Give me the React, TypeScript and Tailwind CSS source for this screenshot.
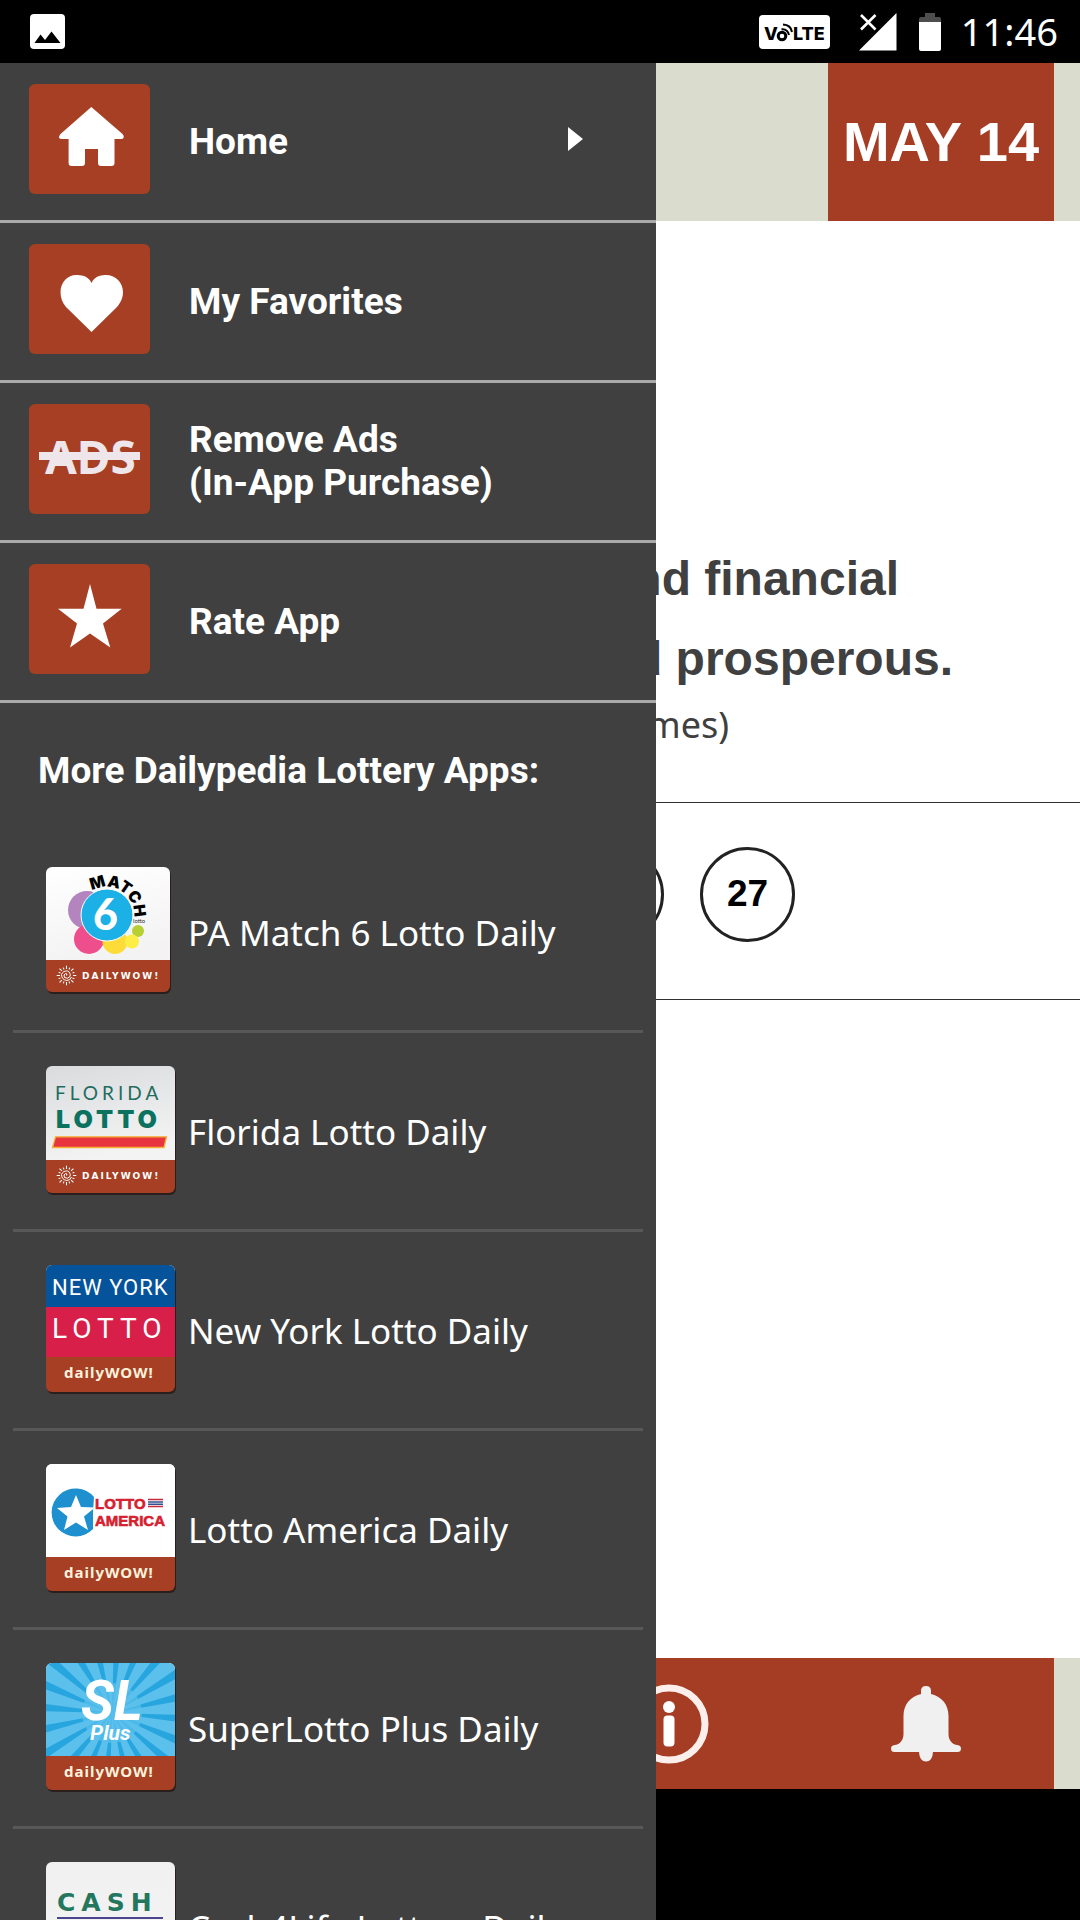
import type { ReactNode } from "react";

const StatusBar = () => (
  <div className="h-[63px] shrink-0 bg-black text-white flex items-center justify-between pl-[30px] pr-[22px]">
    <svg width="35" height="35" viewBox="0 0 35 35" aria-label="Screenshot saved">
      <rect width="35" height="35" rx="4" fill="#fff" />
      <path d="M4.500 29 L10.500 20.500 L15 26 L21.500 17.500 L30.500 29 Z" fill="#000" />
    </svg>
    <div className="flex items-center">
      <svg width="71" height="34" viewBox="0 0 71 34" className="mr-[29px]">
        <rect width="71" height="34" rx="4" fill="#fff" />
        <g fontFamily="Inter, sans-serif" fontWeight="800" fontSize="18">
          <text x="5" y="25">V</text>
          <text x="34" y="25">LTE</text>
        </g>
        <g fill="none" stroke="#000">
          <circle cx="23" cy="21" r="3.800" strokeWidth="3" />
          <path d="M22.500 14.200 Q28.500 13.500 30 20" strokeWidth="2" />
          <path d="M24 9.500 Q32 10 33 17" strokeWidth="2" />
        </g>
      </svg>
      <svg width="38" height="38" viewBox="0 0 38 38" className="mr-[22px]">
        <path d="M0 37.500 L37.500 0 V37.500 Z" fill="#fff" />
        <path d="M2 2 L16.500 16.500 M16.500 2 L2 16.500" stroke="#000" strokeWidth="6" />
        <path d="M2 2 L16.500 16.500 M16.500 2 L2 16.500" stroke="#fff" strokeWidth="2.600" />
      </svg>
      <svg width="22" height="38" viewBox="0 0 22 38" className="mr-5">
        <path d="M6 0 H16 V4 H20 Q22 4 22 6 V10 H0 V6 Q0 4 2 4 H6 Z" fill="#4d4d4d" />
        <path d="M0 9 H22 V36 Q22 38 20 38 H2 Q0 38 0 36 Z" fill="#fff" />
      </svg>
      <span className="pb-0.5 text-[38px] leading-[40px]">11:46</span>
    </div>
  </div>
);

const HomeIcon = () => (
  <path
    d="M62.300 23 L93.500 50 Q95.500 52 94.500 54 Q94 55 92 55 H85.500 V79 Q85.500 82 82.500 82 H72 Q69 82 69 79 V65 H56 V79 Q56 82 53 82 H42.500 Q39.600 82 39.600 79 V55 H33 Q30.500 55 30 53.500 Q29.700 52 31.500 50 Z"
    fill="#fff"
  />
);

const HeartIcon = () => (
  <path
    d="M62.500 39 C66 31 74 31 77 31 C86 31 94 38 94 48 C94 54 91.500 59 88 63 L62.500 88 L37 63 C33.500 59 31.500 54 31.500 48 C31.500 38 39 31 47 31 C51 31 59 31 62.500 39 Z"
    fill="#fff"
  />
);

const AdsIcon = () => (
  <g fill="#eee6ea">
    <text x="16" y="70" fontFamily="Noto Sans, sans-serif" fontWeight="700" fontSize="46">
      ADS
    </text>
    <rect x="10" y="48" width="101" height="8" />
  </g>
);

const StarIcon = () => (
  <path
    d="M61 20 L67.500 44.700 H92.700 L74 59.500 L81.300 83.500 L61 69.500 L41 83.500 L48 59.500 L29 44.700 H54.500 Z"
    fill="#fff"
  />
);

const menu: { label: string; note?: string; icon: ReactNode; arrow?: boolean }[] = [
  { label: "Home", icon: <HomeIcon />, arrow: true },
  { label: "My Favorites", icon: <HeartIcon /> },
  { label: "Remove Ads", note: "(In-App Purchase)", icon: <AdsIcon /> },
  { label: "Rate App", icon: <StarIcon /> },
];

const Sun = ({ x, y }: { x: number; y: number }) => (
  <g transform={`translate(${x} ${y})`} fill="none" stroke="#fff" strokeWidth="1">
    {Array.from({ length: 16 }, (_, i) => (
      <path key={i} d={i % 2 ? "M0 -6.500 V-8.500" : "M0 -6.500 V-9.800"} transform={`rotate(${i * 22.5})`} />
    ))}
    <path d="M0 0 Q1.500 -2 -1 -2 Q-3.500 -1 -2 2 Q1 4 3.500 1 Q4.500 -3 1 -4.500 Q-3.500 -5 -5 -1 Q-5 4 0 5 Q4 5 5 1.500" />
  </g>
);

// rounded tile with a soft dark edge and the brown brand band at the bottom
const Tile = ({
  id,
  band,
  background = "#fff",
  width = 129,
  height = 127,
  upper = false,
  children,
}: {
  id: string;
  band: number;
  background?: string;
  width?: number;
  height?: number;
  upper?: boolean;
  children: ReactNode;
}) => (
  <svg viewBox="0 0 130 130" className="size-[130px] shrink-0" aria-hidden="true">
    <defs>
      <clipPath id={id}>
        <rect width={width} height={height} rx="6" />
      </clipPath>
      <linearGradient id={`${id}-shine`} x1="0" y1="0" x2="0.300" y2="1">
        <stop offset="0" stopColor={background} />
        <stop offset="1" stopColor="#f3f3f3" />
      </linearGradient>
    </defs>
    <rect x="1" y="2" width={width} height={height} rx="6" fill="#2a1f1c" />
    <g clipPath={`url(#${id})`}>
      <rect width="130" height={band} fill={`url(#${id}-shine)`} />
      {children}
      <rect y={band} width="130" height="40" fill="#a63f24" />
    </g>
    {upper ? (
      <>
        <Sun x={20.5} y={band + 15.5} />
        <text x="36" y={band + 19} fill="#fff" fontFamily="DejaVu Sans, sans-serif" fontWeight="700" fontSize="9" className="tracking-[2px]">
          DAILYWOW!
        </text>
      </>
    ) : (
      <text x="18" y={band + 21} fill="#fff3dc" fontFamily="Noto Sans, sans-serif" fontWeight="700" fontSize="15" className="tracking-[1px]">
        dailyWOW!
      </text>
    )}
  </svg>
);

const PaMatch = () => (
  <Tile id="pa" band={93} width={124} height={125} upper>
    <circle cx="41" cy="43" r="19" fill="#b384bd" />
    <circle cx="43" cy="72" r="15" fill="#ee4e8b" />
    <circle cx="69" cy="74.500" r="12.500" fill="#fddc3a" />
    <circle cx="92" cy="64" r="6" fill="#b5cf35" />
    <circle cx="86" cy="74.500" r="7" fill="#fcee45" />
    <circle cx="61" cy="48" r="26" fill="#1bb1e7" stroke="#fff" strokeWidth="1" />
    <text x="47" y="63" fill="#fff" fontFamily="Lato, sans-serif" fontWeight="900" fontSize="43">
      6
    </text>
    <path id="pa-arc" d="M46 24 A27.500 27.500 0 1 1 75 71" fill="none" />
    <text fontFamily="Inter, sans-serif" fontWeight="900" fontSize="16">
      <textPath href="#pa-arc">MATCH</textPath>
    </text>
    <text x="87" y="56" fill="#333" fontFamily="Lato, sans-serif" fontSize="6">
      lotto
    </text>
  </Tile>
);

const Florida = () => (
  <Tile id="fl" band={94} background="#d9dbdd" upper>
    <text x="9" y="34" fill="#1f6c60" fontFamily="Lato, sans-serif" fontSize="19" className="tracking-[4px]">
      FLORIDA
    </text>
    <text x="10" y="62" fill="#0b7260" fontFamily="Inter, sans-serif" fontWeight="900" fontSize="25" className="tracking-[4px]">
      LOTTO
    </text>
    <path d="M9.500 70.800 H120.500 L118 81.500 H6.500 Z" fill="#e8343f" stroke="#f5b335" strokeWidth="1.300" />
  </Tile>
);

const NewYork = () => (
  <Tile id="ny" band={92}>
    <rect width="130" height="42" fill="#04539b" />
    <rect y="42" width="130" height="50" fill="#d81f49" />
    <g fill="#fff" fontFamily="Roboto, sans-serif">
      <text x="6" y="30" fontSize="22" className="tracking-[1px]">
        NEW YORK
      </text>
      <text x="6" y="73" fontSize="28" className="tracking-[6px]">
        LOTTO
      </text>
    </g>
  </Tile>
);

const America = () => (
  <Tile id="us" band={93}>
    <rect width="130" height="93" fill="#fff" />
    <path d="M48 33 A24 24 0 1 0 47 65 V48 Z" fill="#1e90cf" />
    <path
      d="M30 31 L35 43 L49 43.500 L38 52.500 L42 66 L30 58.500 L18 66 L21.500 52.500 L11 44 L25 43 Z"
      fill="#fff"
    />
    <g fill="#d7202f" stroke="#d7202f" strokeWidth="0.600" fontFamily="Liberation Sans, sans-serif" fontWeight="700" fontSize="15">
      <text x="49" y="45">LOTTO</text>
      <text x="49" y="62">AMERICA</text>
    </g>
    <g strokeWidth="1.500">
      <path d="M102 35.500 H117 M102 42.500 H117" stroke="#c92a3b" />
      <path d="M102 38 H117 M102 40.300 H117" stroke="#34508f" />
    </g>
  </Tile>
);

const SuperLotto = () => (
  <Tile id="sl" band={93}>
    <rect width="130" height="93" fill="#5cc0ed" />
    {Array.from({ length: 20 }, (_, i) => (
      <path key={i} d="M66 50 L148 45 V54 Z" fill="#27a5de" transform={`rotate(${i * 18 + 5} 66 50)`} />
    ))}
    <circle cx="66" cy="50" r="30" fill="#5cc0ed" opacity="0.700" />
    <g fill="#fff" fontFamily="Roboto, sans-serif" fontWeight="700" fontStyle="italic">
      <text x="35" y="57" fontSize="55">
        SL
      </text>
      <text x="44" y="77" fontSize="21">
        Plus
      </text>
    </g>
  </Tile>
);

const CashLife = () => (
  <Tile id="cash" band={93} background="#f0f0f1">
    <text x="11" y="49" fill="#24775c" fontFamily="DejaVu Sans, sans-serif" fontWeight="700" fontSize="25" className="tracking-[6px]">
      CASH
    </text>
    <rect x="11" y="55" width="106" height="2" fill="#4a4590" />
  </Tile>
);

const apps = [
  { name: "PA Match 6 Lotto Daily", logo: <PaMatch /> },
  { name: "Florida Lotto Daily", logo: <Florida /> },
  { name: "New York Lotto Daily", logo: <NewYork /> },
  { name: "Lotto America Daily", logo: <America /> },
  { name: "SuperLotto Plus Daily", logo: <SuperLotto /> },
  { name: "Cash4Life Lottery Daily", logo: <CashLife /> },
];

const Drawer = () => (
  <aside className="absolute top-[63px] bottom-0 left-0 w-[656px] max-w-full overflow-hidden bg-[#404040] text-white">
    <nav>
      {menu.map(({ label, note, icon, arrow }) => (
        <a
          key={label}
          href="#"
          className="flex items-center h-40 pb-[6px] pl-[29px] pr-[73px] border-b-3 border-[#a9a9a9] font-['Roboto',sans-serif] font-bold text-[37px] leading-[43px]"
        >
          <svg viewBox="0 0 121 110" className="w-[121px] h-[110px] mr-[39px] shrink-0 rounded-md bg-[#a63f24]">
            {icon}
          </svg>
          <span className="flex-1 pt-[5px]">
            {label}
            {note && <span className="block">{note}</span>}
          </span>
          {arrow && (
            <svg width="15" height="24" viewBox="0 0 15 24">
              <path d="M0 0 L15 12 L0 24 Z" fill="#fff" />
            </svg>
          )}
        </a>
      ))}
    </nav>
    <h2 className="h-[131px] flex items-center pt-1 pl-[38px] font-['Roboto',sans-serif] font-bold text-[37px] leading-[43px]">
      <span>More Dailypedia Lottery Apps:</span>
    </h2>
    <ul className="px-[13px]">
      {apps.map(({ name, logo }) => (
        <li key={name} className="border-b-3 border-[#585858]">
          <a href="#" className="flex items-center gap-3 h-[196px] pl-[33px] text-[35px] leading-[48px] whitespace-nowrap">
            {logo}
            <span className="pt-0.5">{name}</span>
          </a>
        </li>
      ))}
    </ul>
  </aside>
);

const balls = ["", "27"];

const Screen = () => (
  <div className="h-screen overflow-hidden flex flex-col bg-white text-[#404040]">
    <StatusBar />
    <header className="h-[158px] shrink-0 flex justify-end px-[26px] bg-[#dadcce]">
      <h1 className="w-[226px] flex items-center justify-center bg-[#a53d24] text-white font-['Liberation_Sans',sans-serif] font-bold text-[56px] whitespace-nowrap">
        MAY 14
      </h1>
    </header>
    <main className="flex-1 flex flex-col">
      <div className="h-[581px] flex flex-col items-end justify-end pb-[51px] text-right">
        <div className="font-['Liberation_Sans',sans-serif] font-bold text-[48px] leading-[80px]">
          <p className="pr-[181px]">and financial</p>
          <p className="pr-[127px]">and prosperous.</p>
        </div>
        <p className="pr-[351px] text-[36px] leading-[52px]">times)</p>
      </div>
      <div className="h-[198px] flex items-center justify-end gap-9 pb-[14px] pr-[285px] border-y border-[#303030]">
        {balls.map((n, i) => (
          <span
            key={i}
            className="size-[95px] rounded-full border-3 border-[#222] flex items-center justify-center text-black font-['Liberation_Sans',sans-serif] font-bold text-[37px]"
          >
            {n}
          </span>
        ))}
      </div>
    </main>
    <footer className="shrink-0 bg-black pb-[131px]">
      <div className="h-[131px] px-[26px] bg-[#dadcce]">
        <div className="h-full grid grid-cols-4 bg-[#a53d24]">
          <button aria-label="Info" className="col-start-3 flex items-center justify-center">
            <svg width="80" height="80" viewBox="0 0 80 80">
              <circle cx="40" cy="40" r="36" fill="none" stroke="#fbeeeb" strokeWidth="7" />
              <circle cx="40" cy="23" r="6" fill="#fff" />
              <rect x="34.500" y="31.500" width="11" height="31" rx="4" fill="#fff" />
            </svg>
          </button>
          <button aria-label="Notifications" className="flex items-center justify-center">
            <svg width="70" height="76" viewBox="0 0 70 76">
              <path
                d="M30 9 V5 Q30 0 35 0 Q40 0 40 5 V8 C51 10.500 57.500 19 57.500 30 V48 C57.500 54 61 58.500 66.500 59 Q70 59.500 70 62.500 Q70 66 66.500 66 H42 Q41.500 75.500 35 75.500 Q28.500 75.500 28 66 H3.500 Q0 66 0 62.500 Q0 59.500 3.500 59 C9 58.500 12.500 54 12.500 48 V30 C12.500 19 19 10.500 30 8 Z"
                fill="#f0f0f0"
              />
            </svg>
          </button>
        </div>
      </div>
    </footer>
  </div>
);

const App = () => {
  return (
    <div className="relative font-['Noto_Sans',sans-serif]">
      <Screen />
      <Drawer />
    </div>
  );
};

export default App;
